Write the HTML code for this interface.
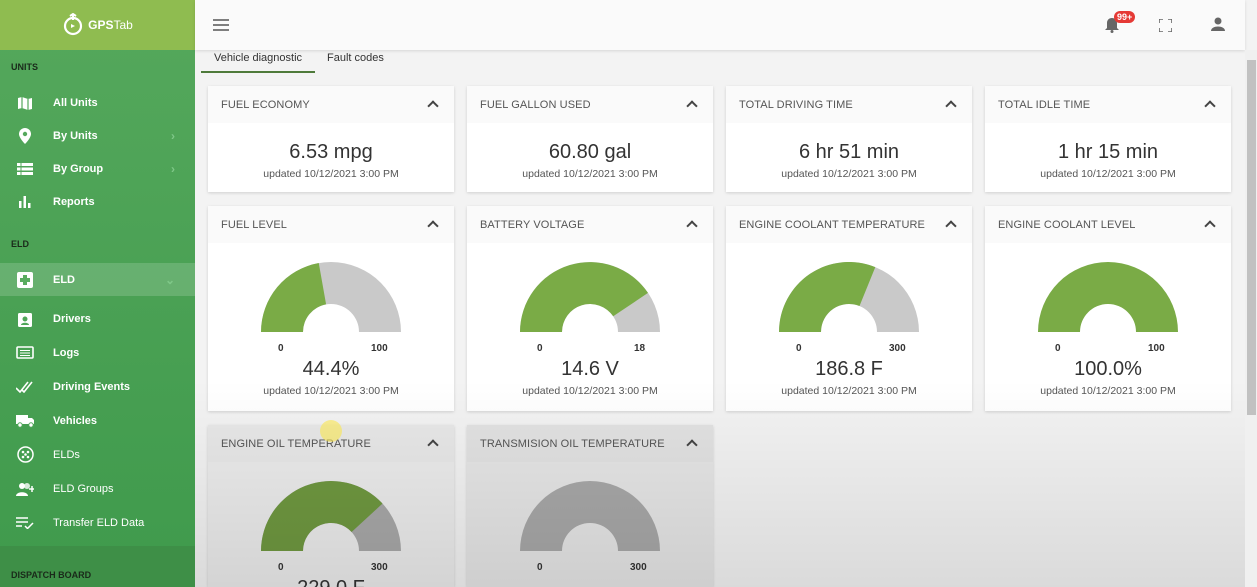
<!DOCTYPE html>
<html><head><meta charset="utf-8"><style>
*{box-sizing:border-box;margin:0;padding:0}
html{width:1257px;height:587px;overflow:hidden}
body{width:1257px;height:587px;overflow:hidden;font-family:"Liberation Sans",sans-serif;background:#f3f3f3;position:relative}
.side{position:absolute;left:0;top:0;width:195px;height:587px;background:linear-gradient(#55a85c,#3f9a4c)}
.logo{height:50px;background:#8fbc50;color:#fff;font-weight:bold;font-size:12px;display:flex;align-items:center;justify-content:center;gap:4px}
.sec{font-size:9px;font-weight:bold;color:#1a2a1a;position:absolute;left:11px}
.it{position:absolute;left:0;width:195px;height:33px;color:#fff;font-size:11px;font-weight:bold;display:flex;align-items:center}
.it .ic{width:18px;height:14px;margin-left:16px;margin-right:19px;display:flex;align-items:center;justify-content:center}
.it .ar{position:absolute;right:20px;color:#7fc788;font-size:12px}
.top{position:absolute;left:195px;top:0;width:1050px;height:50px;background:#fafafa;box-shadow:0 1px 3px rgba(0,0,0,.12)}
.tabs{position:absolute;left:201px;top:50px;font-size:11px;color:#333}
.tab1{position:absolute;left:0;top:0;width:114px;height:23px;border-bottom:2px solid #4e7a3a;text-align:center;padding-top:2px}
.tab2{position:absolute;left:126px;top:2px;white-space:nowrap}
.card{position:absolute;width:246px;background:#fff;box-shadow:0 1px 3px rgba(0,0,0,.15);text-align:center;overflow:hidden}
.card h4{font-size:11px;font-weight:normal;color:#555;text-align:left;padding:13px 13px;height:37px;background:#fafafa;position:relative;letter-spacing:.1px}
.card h4:after{content:"";position:absolute;right:17px;top:16px;width:6px;height:6px;border-left:2px solid #444;border-top:2px solid #444;transform:rotate(45deg)}
.v{font-size:20px;color:#333;margin-top:18px}
.u{font-size:10.5px;color:#555;margin-top:4px}
.g{display:block;margin:19px auto 0}
.lb{position:relative;height:14px;font-size:10px;font-weight:bold;color:#333;margin-top:11px}
.lb span{position:absolute}
.g .gr{fill:#c9c9c9}.g .gn{fill:#7aab46}
.dim{background:#e6e6e6}.dim h4{background:#e2e2e2}
.dim .g .gr{fill:#a8a8a8}.dim .g .gn{fill:#6f9840}
.ov{position:absolute;left:195px;top:380px;width:1050px;height:207px;background:linear-gradient(rgba(0,0,0,0),rgba(0,0,0,.1));pointer-events:none}
.sb{position:absolute;right:0;top:50px;width:12px;height:537px;background:#f0f0f0}
.sb div{position:absolute;left:2px;top:10px;width:9px;height:355px;background:#c1c1c1}
</style></head><body>
<div class="side">
<div class="logo"><svg width="22" height="24" viewBox="0 0 22 24"><circle cx="11" cy="13" r="8" fill="none" stroke="#fff" stroke-width="2.2"/><path d="M11 1v6M8 3l3-2 3 2" stroke="#fff" stroke-width="2" fill="none"/><path d="M9 11l4 2-4 2z" fill="#fff"/></svg><span>GPS<span style="font-weight:normal">Tab</span></span></div>
<div class="sec" style="top:62px">UNITS</div>
<div class="it" style="top:86px"><div class="ic"><svg width="16" height="14"><path d="M1 2l4-1 6 2 4-1v11l-4 1-6-2-4 1z" fill="#fff"/><path d="M5 1v11M11 3v11" stroke="#55a85c" stroke-width="1.2"/></svg></div>All Units</div>
<div class="it" style="top:119px"><div class="ic"><svg width="12" height="16"><path d="M6 0a6 6 0 0 1 6 6c0 4-6 10-6 10S0 10 0 6a6 6 0 0 1 6-6z" fill="#fff"/><circle cx="6" cy="6" r="2.2" fill="#55a85c"/></svg></div>By Units<span class="ar">›</span></div>
<div class="it" style="top:152px"><div class="ic"><svg width="16" height="12"><path d="M0 0h16v3H0zM0 4.5h16v3H0zM0 9h16v3H0z" fill="#fff"/><path d="M4 0v12" stroke="#55a85c"/></svg></div>By Group<span class="ar">›</span></div>
<div class="it" style="top:185px"><div class="ic"><svg width="14" height="12"><path d="M1 5h2.5v7H1zM5.5 0H8v12H5.5zM10 7h2.5v5H10z" fill="#fff"/></svg></div>Reports</div>
<div class="sec" style="top:239px">ELD</div>
<div class="it" style="top:263px;background:rgba(255,255,255,.16)"><div class="ic"><svg width="16" height="16"><rect width="16" height="16" rx="2" fill="#fff"/><path d="M6 3h4v3h3v4h-3v3H6v-3H3V6h3z" fill="#5aac60"/></svg></div>ELD<span class="ar">⌄</span></div>
<div class="it" style="top:302px"><div class="ic"><svg width="14" height="16"><rect y="2" width="14" height="14" rx="1.5" fill="#fff"/><circle cx="7" cy="8" r="2.5" fill="#4fa658"/><path d="M3 14c0-3 8-3 8 0z" fill="#4fa658"/></svg></div>Drivers</div>
<div class="it" style="top:336px"><div class="ic"><svg width="18" height="14"><rect x="1" y="1" width="16" height="11" rx="1" fill="none" stroke="#fff" stroke-width="1.6"/><path d="M4 4.5h10M4 7h10M4 9.5h10" stroke="#fff"/></svg></div>Logs</div>
<div class="it" style="top:370px"><div class="ic"><svg width="18" height="12"><path d="M0 7l4 4 8-10M6 9l2 2 8-10" stroke="#fff" stroke-width="1.6" fill="none"/></svg></div>Driving Events</div>
<div class="it" style="top:404px"><div class="ic"><svg width="19" height="14"><path d="M0 1h12v9H0zM12 4h4l3 3v3h-7z" fill="#fff"/><circle cx="4" cy="11" r="2.2" fill="#fff" stroke="#4fa658"/><circle cx="15" cy="11" r="2.2" fill="#fff" stroke="#4fa658"/></svg></div>Vehicles</div>
<div class="it" style="top:438px"><div class="ic"><svg width="17" height="17"><circle cx="8.5" cy="8.5" r="7.5" fill="none" stroke="#fff" stroke-width="1.5"/><circle cx="6" cy="6" r="1.3" fill="#fff"/><circle cx="11" cy="6" r="1.3" fill="#fff"/><circle cx="6" cy="11" r="1.3" fill="#fff"/><circle cx="11" cy="11" r="1.3" fill="#fff"/><circle cx="8.5" cy="8.5" r="1.3" fill="#fff"/></svg></div><span style="font-weight:normal">ELDs</span></div>
<div class="it" style="top:472px"><div class="ic"><svg width="20" height="14"><circle cx="6" cy="4" r="3" fill="#fff"/><path d="M0 14c0-5 12-5 12 0z" fill="#fff"/><circle cx="11" cy="4" r="3" fill="#fff" opacity=".8"/><path d="M16 4v6M13 7h6" stroke="#fff" stroke-width="1.5"/></svg></div><span style="font-weight:normal">ELD Groups</span></div>
<div class="it" style="top:506px"><div class="ic"><svg width="18" height="12"><path d="M0 1h12M0 5h12M0 9h6" stroke="#fff" stroke-width="1.5"/><path d="M9 9l2.5 2.5L17 6" stroke="#fff" stroke-width="1.5" fill="none"/></svg></div><span style="font-weight:normal">Transfer ELD Data</span></div>
<div style="position:absolute;top:546px;left:0;width:195px;height:41px;background:#3e8f47"></div>
<div class="sec" style="top:570px">DISPATCH BOARD</div>
</div>
<div class="top">
<svg style="position:absolute;left:18px;top:19px" width="16" height="12"><path d="M0 1h16M0 6h16M0 11h16" stroke="#555" stroke-width="1.6"/></svg>
<svg style="position:absolute;left:910px;top:17px" width="14" height="16"><path d="M7 1c3 0 5 2 5 5v5l2 2H0l2-2V6c0-3 2-5 5-5z" fill="#666"/><circle cx="7" cy="14.5" r="1.5" fill="#666"/></svg>
<div style="position:absolute;left:919px;top:11px;background:#e53935;color:#fff;font-size:9px;font-weight:bold;border-radius:7px;padding:1px 3px">99+</div>
<svg style="position:absolute;left:964px;top:19px" width="13" height="13"><path d="M0 4V0h4M9 0h4v4M13 9v4H9M4 13H0V9" stroke="#666" stroke-width="1.6" fill="none"/></svg>
<svg style="position:absolute;left:1016px;top:17px" width="14" height="14"><circle cx="7" cy="4" r="3.5" fill="#666"/><path d="M0 14c0-6 14-6 14 0z" fill="#666"/></svg>
</div>
<div class="tabs"><div class="tab1">Vehicle diagnostic</div><div class="tab2">Fault codes</div></div>

<div class="card" style="left:208px;top:86px;height:106px"><h4>FUEL ECONOMY</h4><div class="v">6.53 mpg</div><div class="u">updated 10/12/2021 3:00 PM</div></div>
<div class="card" style="left:467px;top:86px;height:106px"><h4>FUEL GALLON USED</h4><div class="v">60.80 gal</div><div class="u">updated 10/12/2021 3:00 PM</div></div>
<div class="card" style="left:726px;top:86px;height:106px"><h4>TOTAL DRIVING TIME</h4><div class="v">6 hr 51 min</div><div class="u">updated 10/12/2021 3:00 PM</div></div>
<div class="card" style="left:985px;top:86px;height:106px"><h4>TOTAL IDLE TIME</h4><div class="v">1 hr 15 min</div><div class="u">updated 10/12/2021 3:00 PM</div></div>

<div class="card" style="left:208px;top:206px;height:205px"><h4>FUEL LEVEL</h4>
<svg class="g" width="140" height="70"><path class="gr" d="M0,70A70,70 0 0 1 140,70L98,70A28,28 0 0 0 42,70Z"/><path class="gn" d="M0,70A70,70 0 0 1 57.75,1.05L65.1,42.42A28,28 0 0 0 42,70Z"/></svg>
<div class="lb"><span style="left:70px">0</span><span style="left:163px">100</span></div><div class="v" style="margin-top:1px">44.4%</div><div class="u" style="margin-top:4px">updated 10/12/2021 3:00 PM</div></div>
<div class="card" style="left:467px;top:206px;height:205px"><h4>BATTERY VOLTAGE</h4>
<svg class="g" width="140" height="70"><path class="gr" d="M0,70A70,70 0 0 1 140,70L98,70A28,28 0 0 0 42,70Z"/><path class="gn" d="M0,70A70,70 0 0 1 128,30.9L93.2,54.3A28,28 0 0 0 42,70Z"/></svg>
<div class="lb"><span style="left:70px">0</span><span style="left:167px">18</span></div><div class="v" style="margin-top:1px">14.6 V</div><div class="u" style="margin-top:4px">updated 10/12/2021 3:00 PM</div></div>
<div class="card" style="left:726px;top:206px;height:205px"><h4>ENGINE COOLANT TEMPERATURE</h4>
<svg class="g" width="140" height="70"><path class="gr" d="M0,70A70,70 0 0 1 140,70L98,70A28,28 0 0 0 42,70Z"/><path class="gn" d="M0,70A70,70 0 0 1 96.3,5.1L80.5,44A28,28 0 0 0 42,70Z"/></svg>
<div class="lb"><span style="left:70px">0</span><span style="left:163px">300</span></div><div class="v" style="margin-top:1px">186.8 F</div><div class="u" style="margin-top:4px">updated 10/12/2021 3:00 PM</div></div>
<div class="card" style="left:985px;top:206px;height:205px"><h4>ENGINE COOLANT LEVEL</h4>
<svg class="g" width="140" height="70"><path class="gn" d="M0,70A70,70 0 0 1 140,70L98,70A28,28 0 0 0 42,70Z"/></svg>
<div class="lb"><span style="left:70px">0</span><span style="left:163px">100</span></div><div class="v" style="margin-top:1px">100.0%</div><div class="u" style="margin-top:4px">updated 10/12/2021 3:00 PM</div></div>

<div class="card dim" style="left:208px;top:425px;height:162px;background:#ececec"><h4 style="background:#e8e8e8">ENGINE OIL TEMPERATURE</h4>
<svg class="g" width="140" height="70"><path class="gr" d="M0,70A70,70 0 0 1 140,70L98,70A28,28 0 0 0 42,70Z"/><path class="gn" d="M0,70A70,70 0 0 1 121.5,22.6L90.6,51A28,28 0 0 0 42,70Z"/></svg>
<div class="lb"><span style="left:70px">0</span><span style="left:163px">300</span></div><div class="v" style="margin-top:1px">229.0 F</div></div>
<div class="card dim" style="left:467px;top:425px;height:162px"><h4>TRANSMISION OIL TEMPERATURE</h4>
<svg class="g" width="140" height="70"><path class="gr" d="M0,70A70,70 0 0 1 140,70L98,70A28,28 0 0 0 42,70Z"/></svg>
<div class="lb"><span style="left:70px">0</span><span style="left:163px">300</span></div></div>
<div style="position:absolute;left:320px;top:420px;width:22px;height:22px;border-radius:50%;background:rgba(255,235,80,.6)"></div>
<div class="ov"></div>
<div class="sb"><div></div></div>
</body></html>
